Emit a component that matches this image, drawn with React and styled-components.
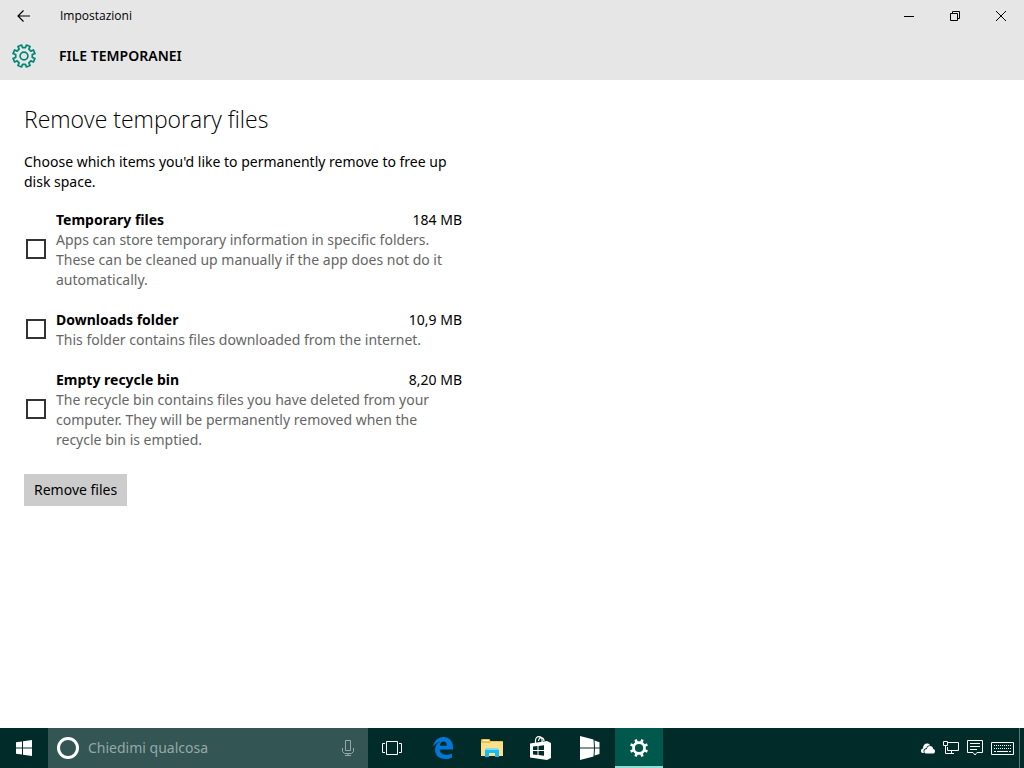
import { useState } from "react";
import styled, { createGlobalStyle } from "styled-components";

const items = [
  {
    id: "temp",
    title: "Temporary files",
    size: "184 MB",
    text: "Apps can store temporary information in specific folders. These can be cleaned up manually if the app does not do it automatically.",
  },
  {
    id: "downloads",
    title: "Downloads folder",
    size: "10,9 MB",
    text: "This folder contains files downloaded from the internet.",
  },
  {
    id: "recycle",
    title: "Empty recycle bin",
    size: "8,20 MB",
    text: "The recycle bin contains files you have deleted from your computer. They will be permanently removed when the recycle bin is emptied.",
  },
];

// outline of an eight-toothed gear around (12, 12)
const gearPath = (outer, inner, tip, root) => {
  const point = (radius, degrees) => {
    const angle = (degrees * Math.PI) / 180;
    const x = 12 + radius * Math.cos(angle);
    const y = 12 + radius * Math.sin(angle);
    return `${x.toFixed(2)} ${y.toFixed(2)}`;
  };
  const points = [];
  for (let i = 0; i < 8; i++) {
    const middle = 22.5 + i * 45;
    points.push(point(inner, middle - root));
    points.push(point(outer, middle - tip));
    points.push(point(outer, middle + tip));
    points.push(point(inner, middle + root));
  }
  return `M${points.join("L")}Z`;
};

const BackIcon = () => (
  <svg width="14" height="12" viewBox="0 0 14 12" fill="none" stroke="#000" strokeWidth="1.2">
    <path d="M6.5 .5 1 6l5.500 5.500M1 6h12" />
  </svg>
);

const GearOutlineIcon = () => (
  <svg width="24" height="24" viewBox="0 0 24 24" fill="none" stroke="#008675" strokeWidth="1.7" strokeLinejoin="round">
    <path d={gearPath(11.2, 8.4, 10, 13)} />
    <circle cx="12" cy="12" r="3.900" />
  </svg>
);

const MinimizeIcon = () => (
  <svg width="10" height="10" viewBox="0 0 10 10" fill="#000">
    <path d="M0 5h10v1H0z" />
  </svg>
);

const RestoreIcon = () => (
  <svg width="10" height="10" viewBox="0 0 10 10" fill="none" stroke="#000">
    <path d="M.5 2.5h7v7h-7zM2.5 2.5v-2h7v7h-2" />
  </svg>
);

const CloseIcon = () => (
  <svg width="10" height="10" viewBox="0 0 10 10" fill="none" stroke="#000">
    <path d="M0 0l10 10M10 0 0 10" />
  </svg>
);

const WindowsIcon = () => (
  <svg width="16" height="16" viewBox="0 0 16 16" fill="#fff">
    <path d="M0 2.3 6 1.4v6.1H0zM7 1.2 16 0v7.5H7zM0 8.5h6v6.1l-6-.9zM7 8.5h9V16l-9-1.2z" />
  </svg>
);

const MicIcon = () => (
  <svg width="12" height="16" viewBox="0 0 12 16" fill="none" stroke="#96a9a8">
    <path d="M3.5 .5h5v10h-5zM.5 8v3.5l2 2h7l2-2V8M6 13.5V15M3 15.5h6" />
  </svg>
);

const TaskViewIcon = () => (
  <svg width="20" height="14" viewBox="0 0 20 14" fill="none" stroke="#fff">
    <path d="M4.500 .5h11v13h-11zM3 2.500H.5v9H3M17 2.500h2.500v9H17" />
  </svg>
);

const EdgeIcon = () => (
  <svg width="20" height="22" viewBox="0 0 20 22" fill="#0078d7">
    <path d="M0 10C.9 3.900 5 0 10.500 0 16.500 0 20 4.400 20 10.200v2.300H6.700c.2 3.600 3.100 5.300 6.500 5.300 2.200 0 4-.6 5.700-1.600v4.200c-1.900 1.100-4.200 1.600-6.800 1.600-6.100 0-10-3.600-10-9.200 0-3.800 2-6.600 5.300-8.200C4.200 5.500 1.700 7.400 0 10zm6.900-1.300h7c0-2.700-1.300-4.200-3.500-4.200-2 0-3.300 1.700-3.500 4.200z" />
  </svg>
);

const ExplorerIcon = () => (
  <svg width="22" height="18" viewBox="0 0 22 18">
    <path d="M0 1.500Q0 0 1 0h7q1 0 1 1l.5 1H21q1 0 1 1v14H0z" fill="#f0c350" />
    <path d="M2 1h6v1H2z" fill="#fff5d0" />
    <path d="M0 4h9l1-1h12v14H0z" fill="#ffe08a" />
    <path d="M4 18v-7l2-2h10l2 2v7h-4v-4H8v4z" fill="#14bdf5" />
    <path d="M4 11l2-2h10l2 2z" fill="#7fdcfb" />
  </svg>
);

const StoreIcon = () => (
  <svg width="22" height="24" viewBox="0 0 22 24">
    <path d="M5.500 7V4.500C5.500 2 7 .7 8.800.7s3.300 1.300 3.300 3.800V6M8.500 5C8.800 2.500 10 1.400 11.500 1.600c1.500.2 2.500 1.400 2.500 3.400" fill="none" stroke="#fff" strokeWidth="1.200" />
    <path d="M0 7.500 17 5v19L0 21.500z" fill="#fff" />
    <path d="M17 5l4 2v15l-4 2z" fill="#fff" />
    <path d="M3 10.500l4.500-.5v4H3zM8.500 9.900 14 9.200V14H8.500zM3 15h4.500v4L3 18.500zM8.500 15H14v4.800l-5.500-.7z" fill="#002b28" />
  </svg>
);

const PanelsIcon = () => (
  <svg width="20" height="24" viewBox="0 0 20 24" fill="#fff">
    <path d="M0 0l13.500 3.500 .5 8H0zM0 12.500h14l-.5 8L0 24zM14.500 4.500l5 1.700v5.300H15zM15 12.500h4.500V18l-5 1.500z" />
  </svg>
);

const GearIcon = () => (
  <svg width="24" height="24" viewBox="0 0 24 24" fill="#fff" fillRule="evenodd">
    <path d={`${gearPath(9.2, 6.9, 8, 11)}M16.100 12a4.100 4.100 0 1 0-8.200 0 4.100 4.100 0 1 0 8.200 0z`} />
  </svg>
);

const CloudIcon = () => (
  <svg width="14" height="11" viewBox="0 0 14 11" fill="#fff">
    <path d="M3 10H1.700C.5 9.700 0 8.800 0 7.700c0-1.300.9-2 2-2.200C2 2.500 3.800.6 6 .6c1.500 0 2.600.6 3.200 1.600-2.100 0-3.300 1-3.800 2.800C3.500 5.500 2.500 6.700 2.500 8c0 .8.100 1.500.5 2z" />
    <path d="M5.500 10.600c-1.300 0-2.200-.9-2.200-2.200 0-1.400 1-2.300 2.500-2.500C6.200 4.200 7.300 3 9 3c1.800 0 3 1.200 3.200 3 1.200.2 1.800 1.100 1.800 2.300 0 1.400-.9 2.300-2.200 2.300z" />
  </svg>
);

const NetworkIcon = () => (
  <svg width="16" height="14" viewBox="0 0 16 14" fill="none" stroke="#fff">
    <path d="M5 1.500h10.500v8h-11V6M.5 .5h4v4h-4zM2.500 4.500v8h8M8.500 9.500v3M6 12.500h5" />
  </svg>
);

const MessageIcon = () => (
  <svg width="16" height="16" viewBox="0 0 16 16" fill="none" stroke="#fff">
    <path d="M.5 .5h15v12H10L8 15l-2-2.500H.5zM3 3.500h10M3 6.500h10M3 9.500h7" />
  </svg>
);

const KeyboardIcon = () => (
  <svg width="23" height="13" viewBox="0 0 23 13" fill="none" stroke="#fff">
    <path d="M.5 .5h22v12H.5z" />
    <path d="M3 3.500h17M3 6.500h17" strokeDasharray="1 1" />
    <path d="M3 9.500h2M6 9.500h11M18 9.500h2" />
  </svg>
);

const apps = [
  { name: "Microsoft Edge", Icon: EdgeIcon },
  { name: "Esplora file", Icon: ExplorerIcon },
  { name: "Store", Icon: StoreIcon },
  { name: "Windows", Icon: PanelsIcon },
  { name: "Impostazioni", Icon: GearIcon, active: true },
];

export default function App() {
  const [checked, setChecked] = useState({});

  const handleToggle = (id) => {
    setChecked({ ...checked, [id]: !checked[id] });
  };

  return (
    <>
      <GlobalStyle />
      <Desktop>
        <WindowHeader>
          <TitleBar>
            <BackButton aria-label="Indietro">
              <BackIcon />
            </BackButton>
            <WindowTitle>Impostazioni</WindowTitle>
            <WindowButton aria-label="Riduci a icona">
              <MinimizeIcon />
            </WindowButton>
            <WindowButton aria-label="Ripristina">
              <RestoreIcon />
            </WindowButton>
            <WindowButton aria-label="Chiudi">
              <CloseIcon />
            </WindowButton>
          </TitleBar>
          <PageBar>
            <GearOutlineIcon />
            <PageName>FILE TEMPORANEI</PageName>
          </PageBar>
        </WindowHeader>

        <Content>
          <Heading>Remove temporary files</Heading>
          <Intro>
            Choose which items you'd like to permanently remove to free up disk
            space.
          </Intro>
          <ItemList>
            {items.map(({ id, title, size, text }) => (
              <Item key={id}>
                <Checkbox
                  id={id}
                  type="checkbox"
                  checked={!!checked[id]}
                  onChange={() => handleToggle(id)}
                />
                <ItemLabel htmlFor={id}>
                  <ItemHead>
                    <ItemTitle>{title}</ItemTitle>
                    <span>{size}</span>
                  </ItemHead>
                  <ItemText>{text}</ItemText>
                </ItemLabel>
              </Item>
            ))}
          </ItemList>
          <RemoveButton>Remove files</RemoveButton>
        </Content>

        <Taskbar>
          <TaskButton aria-label="Start">
            <WindowsIcon />
          </TaskButton>
          <SearchBox>
            <CortanaRing />
            <SearchInput aria-label="Cerca" placeholder="Chiedimi qualcosa" />
            <MicIcon />
          </SearchBox>
          <TaskButton aria-label="Visualizzazione attività">
            <TaskViewIcon />
          </TaskButton>
          <Apps>
            {apps.map(({ name, Icon, active }) => (
              <TaskButton key={name} aria-label={name} $active={active}>
                <Icon />
              </TaskButton>
            ))}
          </Apps>
          <Tray>
            <CloudIcon />
            <NetworkIcon />
            <MessageIcon />
            <KeyboardIcon />
          </Tray>
          <ShowDesktop aria-label="Mostra desktop" />
        </Taskbar>
      </Desktop>
    </>
  );
}

const GlobalStyle = createGlobalStyle`
  * {
    box-sizing: border-box;
  }
  body {
    margin: 0;
    background-color: white;
    color: black;
    font-family: "Noto Sans", "Open Sans", sans-serif;
    font-size: 14px;
    line-height: 20px;
  }
  button,
  input {
    margin: 0;
    padding: 0;
    border: none;
    border-radius: 0;
    background: none;
    color: inherit;
    font: inherit;
  }
  svg {
    display: block;
    flex-shrink: 0;
  }
`;

const Desktop = styled.div`
  display: flex;
  flex-direction: column;
  min-height: 100vh;
`;

const WindowHeader = styled.header`
  background-color: #e6e6e6;
`;

const TitleBar = styled.div`
  display: flex;
  height: 32px;
`;

const WindowButton = styled.button`
  display: flex;
  align-items: center;
  justify-content: center;
  width: 46px;
`;

const BackButton = styled(WindowButton)`
  width: 48px;
`;

const WindowTitle = styled.div`
  flex: 1;
  padding-left: 12px;
  font-family: "Open Sans", sans-serif;
  font-size: 12px;
  line-height: 32px;
`;

const PageBar = styled.div`
  display: flex;
  align-items: center;
  gap: 23px;
  height: 48px;
  padding: 0 12px;
`;

const PageName = styled.div`
  font-weight: 600;
`;

const Content = styled.main`
  flex: 1;
  width: 100%;
  max-width: 486px;
  padding: 24px;
`;

const Heading = styled.h1`
  margin: 0 0 18px;
  font-family: "Open Sans", sans-serif;
  font-size: 23px;
  font-weight: 300;
  line-height: 30px;
`;

const Intro = styled.p`
  margin: 0 0 18px;
`;

const ItemList = styled.ul`
  display: flex;
  flex-direction: column;
  gap: 20px;
  margin: 0 0 24px;
  padding: 0;
  list-style: none;
`;

const Item = styled.li`
  display: flex;
  align-items: center;
  gap: 10px;
  padding-left: 2px;
`;

const Checkbox = styled.input`
  appearance: none;
  flex-shrink: 0;
  width: 20px;
  height: 20px;
  margin-bottom: 2px;
  border: 2px solid #333;
  &:checked {
    background-color: #008675;
  }
`;

const ItemLabel = styled.label`
  flex: 1;
`;

const ItemHead = styled.div`
  display: flex;
  justify-content: space-between;
`;

const ItemTitle = styled.span`
  font-weight: bold;
`;

const ItemText = styled.div`
  color: #666;
`;

const RemoveButton = styled.button`
  height: 32px;
  padding: 0 10px;
  background-color: #ccc;
`;

const Taskbar = styled.footer`
  display: flex;
  height: 40px;
  background-color: #002b28;
`;

const TaskButton = styled.button`
  display: flex;
  align-items: center;
  justify-content: center;
  width: 48px;
  ${({ $active }) =>
    $active && "background-color: #00574c; box-shadow: inset 0 -2px #8fded3;"}
`;

const SearchBox = styled.div`
  display: flex;
  align-items: center;
  width: 320px;
  padding: 0 14px 0 9px;
  background-color: #335553;
`;

const CortanaRing = styled.span`
  width: 22px;
  height: 22px;
  border: 3px solid white;
  border-radius: 50%;
`;

const SearchInput = styled.input`
  flex: 1;
  min-width: 0;
  margin-left: 9px;
  outline: none;
  &::placeholder {
    color: #96a9a8;
    opacity: 1;
  }
`;

const Apps = styled.div`
  display: flex;
  gap: 1px;
  margin-left: 3px;
`;

const Tray = styled.div`
  display: flex;
  align-items: center;
  gap: 8px;
  margin-left: auto;
  padding-right: 5px;
`;

const ShowDesktop = styled.button`
  width: 5px;
  border-left: 1px solid #5c7775;
`;
